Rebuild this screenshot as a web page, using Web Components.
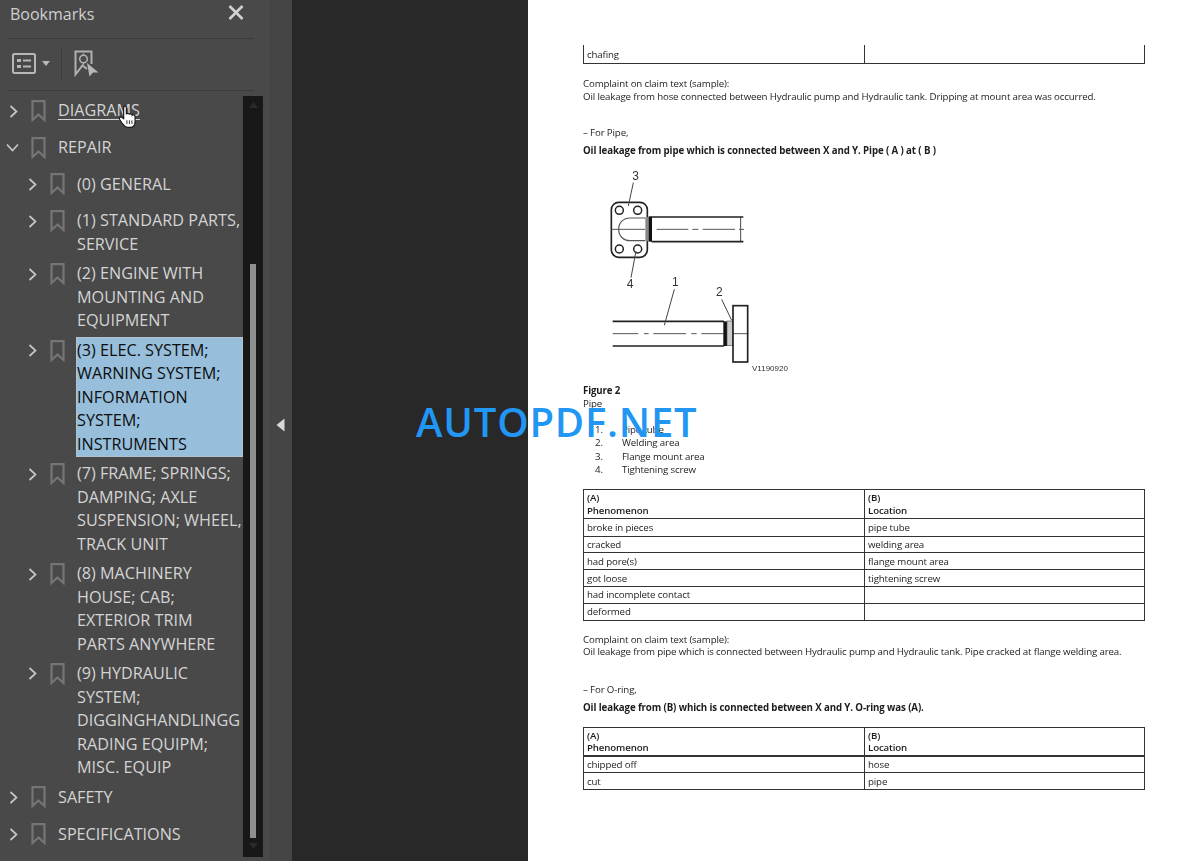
<!DOCTYPE html>
<html lang="en">
<head>
<meta charset="utf-8">
<title>Bookmarks</title>
<style>
  html, body { margin: 0; height: 100%; overflow: hidden; background: #282828; }
</style>
</head>
<body>
<pdf-viewer>
  <bookmarks-panel slot="side">
    <bookmark-item hover>DIAGRAMS</bookmark-item>
    <bookmark-item open>REPAIR</bookmark-item>
    <bookmark-item level="1">(0) GENERAL</bookmark-item>
    <bookmark-item level="1">(1) STANDARD PARTS,<br>SERVICE</bookmark-item>
    <bookmark-item level="1">(2) ENGINE WITH<br>MOUNTING AND<br>EQUIPMENT</bookmark-item>
    <bookmark-item level="1" selected>(3) ELEC. SYSTEM;<br>WARNING SYSTEM;<br>INFORMATION<br>SYSTEM;<br>INSTRUMENTS</bookmark-item>
    <bookmark-item level="1">(7) FRAME; SPRINGS;<br>DAMPING; AXLE<br>SUSPENSION; WHEEL,<br>TRACK UNIT</bookmark-item>
    <bookmark-item level="1">(8) MACHINERY<br>HOUSE; CAB;<br>EXTERIOR TRIM<br>PARTS ANYWHERE</bookmark-item>
    <bookmark-item level="1">(9) HYDRAULIC<br>SYSTEM;<br>DIGGINGHANDLINGG<br>RADING EQUIPM;<br>MISC. EQUIP</bookmark-item>
    <bookmark-item>SAFETY</bookmark-item>
    <bookmark-item>SPECIFICATIONS</bookmark-item>
  </bookmarks-panel>
  <pdf-page slot="main">
    <spec-table open-top style="margin-top:45px" rows="17.5">
      <spec-row>chafing</spec-row>
    </spec-table>
    <pdf-para style="margin-top:14.5px">Complaint on claim text (sample):<br>Oil leakage from hose connected between Hydraulic pump and Hydraulic tank. Dripping at mount area was occurred.</pdf-para>
    <pdf-para style="margin-top:24px">– For Pipe,</pdf-para>
    <pdf-para bold style="margin-top:5.5px">Oil leakage from pipe which is connected between X and Y. Pipe ( A ) at ( B )</pdf-para>
    <pipe-figure style="margin-top:3.5px"></pipe-figure>
    <pdf-para style="margin-top:4px"><b>Figure 2</b><br>Pipe</pdf-para>
    <pdf-list style="margin-top:13px">
      <span>1.</span><span>Pipe tube</span>
      <span>2.</span><span>Welding area</span>
      <span>3.</span><span>Flange mount area</span>
      <span>4.</span><span>Tightening screw</span>
    </pdf-list>
    <spec-table style="margin-top:12.8px" rows="29.5 17.5 16.5 17 16.5 17 16">
      <spec-row head><span>(A)<br>Phenomenon</span><span slot="b">(B)<br>Location</span></spec-row>
      <spec-row>broke in pieces<span slot="b">pipe tube</span></spec-row>
      <spec-row>cracked<span slot="b">welding area</span></spec-row>
      <spec-row>had pore(s)<span slot="b">flange mount area</span></spec-row>
      <spec-row>got loose<span slot="b">tightening screw</span></spec-row>
      <spec-row>had incomplete contact</spec-row>
      <spec-row>deformed</spec-row>
    </spec-table>
    <pdf-para style="margin-top:13px">Complaint on claim text (sample):<br>Oil leakage from pipe which is connected between Hydraulic pump and Hydraulic tank. Pipe cracked at flange welding area.</pdf-para>
    <pdf-para style="margin-top:25px">– For O-ring,</pdf-para>
    <pdf-para bold style="margin-top:6px">Oil leakage from (B) which is connected between X and Y. O-ring was (A).</pdf-para>
    <spec-table style="margin-top:12.25px" rows="28.5 16.5 16">
      <spec-row head thick><span>(A)<br>Phenomenon</span><span slot="b">(B)<br>Location</span></spec-row>
      <spec-row>chipped off<span slot="b">hose</span></spec-row>
      <spec-row>cut<span slot="b">pipe</span></spec-row>
    </spec-table>
  </pdf-page>
</pdf-viewer>

<template id="viewer-tpl">
  <style>
    :host { display: flex; height: 861px; width: 1200px; position: relative; overflow: hidden; }
    .side { width: 270px; flex: none; }
    .split { width: 22px; flex: none; background: #454545; border-left: 1px solid #414141; box-sizing: border-box;
      display: flex; align-items: center; justify-content: center; }
    .split svg { display: block; margin: -11px 0 0 -2px; }
    .gap { width: 236px; flex: none; background: #282828; }
    .main { flex: 1; background: #fff; }
    .mark { position: absolute; left: 416px; top: 395px; font: 600 40px/54px "Open Sans", sans-serif; color: #2196f3; letter-spacing: .8px; white-space: nowrap; }
  </style>
  <div class="side"><slot name="side"></slot></div>
  <div class="split"><svg width="9" height="14" viewBox="0 0 9 14"><path d="M8.5 .5V13.5L.5 7Z" fill="#d9d9d9"/></svg></div>
  <div class="gap"></div>
  <div class="main"><slot name="main"></slot></div>
  <div class="mark">AUTOPDF.NET</div>
</template>

<template id="panel-tpl">
  <style>
    :host { display: flex; flex-direction: column; height: 100%; background: #494949; color: #d4d4d4; font-family: "Open Sans", sans-serif; position: relative; }
    header { height: 38px; flex: none; margin: 0 16px 0 9px; border-bottom: 1px solid #3b3b3b; display: flex; justify-content: space-between; }
    h1 { margin: 0 0 0 1px; font: 400 16px/28px "Open Sans", sans-serif; color: #cfcfcf; }
    header svg { margin: 5px 10px 0 0; }
    .tools { height: 48px; padding-bottom: 3px; flex: none; margin: 0 16px 0 9px; border-bottom: 1px solid #3b3b3b; display: flex; align-items: center; }
    .tools .sep { width: 1px; height: 33px; background: #3c3c3c; margin: 0 12px 0 11px; }
    .tools .caret { margin-left: 6px; }
    .tools svg { display: block; flex: none; }
    .tools .list { margin-left: 3px; }
    .body { flex: 1; display: flex; margin-top: 5px; min-height: 0; }
    .tree { width: 243px; flex: none; display: flex; flex-direction: column; gap: 2.5px; overflow: hidden; }
    .bar { width: 20px; flex: none; height: 761px; background: #181818; display: flex; flex-direction: column; align-items: center; }
    .bar .up, .bar .down { flex: none; }
    .bar .up { margin-top: 6px; }
    .bar .fill { height: 156px; }
    .bar .thumb { width: 6px; height: 574px; background: #8f8f8f; }
    .bar .down { margin-top: 5px; }
    .hand { position: absolute; left: 118px; top: 104px; }
  </style>
  <header>
    <h1>Bookmarks</h1>
    <svg width="16" height="15" viewBox="0 0 16 15"><path d="M1.5 1 14.5 14M14.5 1 1.5 14" stroke="#d2d2d2" stroke-width="2.6" fill="none"/></svg>
  </header>
  <div class="tools">
    <svg class="list" width="24" height="21" viewBox="0 0 24 21" fill="none">
      <rect x="1" y="1" width="22" height="19" rx="1.5" stroke="#b8b8b8" stroke-width="2"/>
      <rect x="5" y="6" width="4" height="3" fill="#b8b8b8"/><rect x="5" y="12" width="4" height="3" fill="#b8b8b8"/>
      <path d="M11 7.5h8M11 13.5h8" stroke="#b8b8b8" stroke-width="2"/>
    </svg>
    <svg class="caret" width="8" height="5" viewBox="0 0 8 5"><path d="M0 0H8L4 5Z" fill="#b8b8b8"/></svg>
    <div class="sep"></div>
    <svg width="25" height="27" viewBox="0 0 25 27" fill="none">
      <path d="M13 19 8.5 15.5 1.5 24.5V1.5H17.5V14" stroke="#b0b0b0" stroke-width="2"/>
      <circle cx="9.5" cy="9" r="3.8" stroke="#b0b0b0" stroke-width="1.6"/>
      <path d="M9.5 3.5v2M9.5 12.5v2" stroke="#b0b0b0" stroke-width="1.4"/>
      <path d="M13 13 24.5 22.5H19L15.5 26.5Z" fill="#b8b8b8"/>
    </svg>
  </div>
  <div class="body">
    <div class="tree"><slot></slot></div>
    <div class="bar">
      <svg class="up" width="9" height="6" viewBox="0 0 9 6"><path d="M0 6H9L4.5 0Z" fill="#2a2a2a"/></svg>
      <div class="fill"></div>
      <div class="thumb"></div>
      <svg class="down" width="9" height="6" viewBox="0 0 9 6"><path d="M0 0H9L4.5 6Z" fill="#2a2a2a"/></svg>
    </div>
  </div>
  <svg class="hand" width="20" height="25" viewBox="0 0 18 23">
    <path d="M5 13.5V3.5C5 1.5 7.5 1.5 7.5 3.5V9.5C7.8 8.2 10 8.2 10.2 9.7 10.6 8.6 12.6 8.8 12.8 10.3 13.3 9.5 15.4 9.8 15.5 11.6V16C15.5 19 14 21.5 11 21.5H8.5C6 21.5 5 19.5 3.5 17.5L1.2 14C.4 12.5 2.4 11.2 3.5 12.4Z" fill="#fff" stroke="#1b1b1b" stroke-width="1.1"/>
    <path d="M8 15v3.5M10.3 15v3.5M12.6 15v3.5" stroke="#333" stroke-width=".9"/>
  </svg>
</template>

<template id="item-tpl">
  <style>
    :host { display: flex; align-items: flex-start; min-height: 34.2px; color: #d4d4d4; font: 400 16.2px/23.5px "Open Sans", sans-serif; white-space: nowrap; }
    :host([level="1"]) { padding-left: 19px; }
    .chev { width: 31px; flex: none; height: 30px; display: flex; align-items: center; padding-left: 9px; box-sizing: border-box; }
    .mark { width: 27px; flex: none; height: 30px; display: flex; align-items: center; }
    svg { display: block; }
    .txt { flex: 1; min-width: 0; margin-top: 1.5px; padding-top: 1.9px; padding-bottom: .1px; }
    :host([level="1"]) .txt { margin-left: -1px; padding-left: 1px; }
    :host([selected]) .txt { background: #97bfdb; color: #0e0e0e; outline: 1px dotted #c8c8c8; outline-offset: -1px; }
    :host([hover]) .txt span { text-decoration: underline; text-underline-offset: 3px; }
  </style>
  <div class="chev"><svg class="c" width="9" height="13" viewBox="0 0 9 13"><path d="M1.5 1 7.5 6.5 1.5 12" fill="none" stroke="#c6c6c6" stroke-width="1.7"/></svg></div>
  <div class="mark"><svg width="15" height="22" viewBox="0 0 15 22"><path d="M1.5 1.2H13.5V20L7.5 14.5 1.5 20Z" fill="none" stroke="#757575" stroke-width="2.2"/></svg></div>
  <div class="txt"><span><slot></slot></span></div>
</template>

<template id="page-tpl">
  <style>
    :host { display: block; height: 861px; box-sizing: border-box; padding: 0 55px; background: #fff; color: #1c1c1c; overflow: hidden;
      font-family: "Open Sans", sans-serif; font-size: 9.7px; }
    .ink { filter: blur(.35px); }
  </style>
  <div class="ink"><slot></slot></div>
</template>

<template id="para-tpl">
  <style>
    :host { display: block; font: 400 9.7px/12.5px "Open Sans", sans-serif; letter-spacing: -.135px; white-space: nowrap; }
    :host([bold]) { font-weight: 700; letter-spacing: -.11px; }
  </style>
  <slot></slot>
</template>

<template id="list-tpl">
  <style>
    :host { display: grid; grid-template-columns: 27px 1fr; padding-left: 12px; font: 400 9.7px/13.3px "Open Sans", sans-serif; letter-spacing: -.135px; }
  </style>
  <slot></slot>
</template>

<template id="table-tpl">
  <style>
    :host { display: grid; width: 562px; border: 1px solid #333; box-sizing: border-box; }
    :host([open-top]) { border-top: 0; }
  </style>
  <slot></slot>
</template>

<template id="row-tpl">
  <style>
    :host { display: grid; grid-template-columns: 280px 1fr; font: 400 9.7px/12.5px "Open Sans", sans-serif; letter-spacing: -.135px; border-bottom: 1px solid #333; box-sizing: border-box; }
    :host(:last-child) { border-bottom: 0; }
    :host([head]) { font-weight: 600; }
    :host([thick]) { border-bottom-width: 2px; }
    :host(:only-child) .cell { padding-top: 3.5px; }
    .cell { padding: 1.5px 3px 0; display: flex; align-items: center; white-space: nowrap; }
    .b { border-left: 1px solid #333; }
  </style>
  <div class="cell"><slot></slot></div>
  <div class="cell b"><slot name="b"></slot></div>
</template>

<template id="figure-tpl">
  <style>
    :host { display: block; height: 220px; margin-left: -13px; }
    svg { display: block; filter: blur(.45px); }
    text { font-family: "Liberation Sans", sans-serif; fill: #333; }
  </style>
  <svg width="240" height="220" viewBox="0 0 720 660" fill="none" stroke="#222">
    <rect x="124" y="124" width="108" height="165" rx="22" stroke-width="5"/>
    <circle cx="148" cy="148" r="12" stroke-width="4.5"/><circle cx="203" cy="148" r="12" stroke-width="4.5"/>
    <circle cx="148" cy="264" r="12" stroke-width="4.5"/><circle cx="203" cy="264" r="12" stroke-width="4.5"/>
    <path d="M226 171H180C160 171 146 185 146 205 146 225 160 239 180 239H226" stroke-width="3.5" stroke="#555"/>
    <rect x="226" y="168" width="10" height="72" fill="#888" stroke="none"/>
    <rect x="236" y="166" width="10" height="76" fill="#111" stroke="none"/>
    <path d="M245 168H520M245 242H520" stroke-width="5"/>
    <path d="M512 168V242" stroke-width="2.5"/>
    <path d="M124 205H225M260 205H355M367 205H385M398 205H495M507 205H522" stroke-width="3" stroke="#555"/>
    <path d="M128 481H462M128 555H462" stroke-width="5"/>
    <path d="M128 518H205M222 518H236M250 518H348M364 518H380M394 518H460M490 518H535" stroke-width="3" stroke="#555"/>
    <rect x="460" y="481" width="11" height="74" fill="#111" stroke="none"/>
    <rect x="471" y="480" width="17" height="74" fill="#ccc" stroke="#555" stroke-width="2"/>
    <rect x="489" y="434" width="44" height="169" stroke-width="5"/>
    <path d="M313 385 283 493M455 415 485 478M190 65 175 135M198 270 183 350" stroke-width="3" stroke="#444"/>
    <text x="187" y="58" font-size="36" stroke="none">3</text>
    <text x="170" y="382" font-size="36" stroke="none">4</text>
    <text x="306" y="375" font-size="36" stroke="none">1</text>
    <text x="438" y="404" font-size="36" stroke="none">2</text>
    <text x="546" y="630" font-size="24" stroke="none">V1190920</text>
  </svg>
</template>

<script>
  // every element here is just its template cloned into an open shadow root
  function tpl(id) {
    return document.getElementById(id).content.cloneNode(true);
  }

  class ShadowBase extends HTMLElement {
    constructor() {
      super();
      this.attachShadow({ mode: 'open' }).appendChild(tpl(this.constructor.tplId));
    }
  }

  class PdfViewer extends ShadowBase { static tplId = 'viewer-tpl'; }
  class BookmarksPanel extends ShadowBase { static tplId = 'panel-tpl'; }
  class PdfPage extends ShadowBase { static tplId = 'page-tpl'; }
  class PdfPara extends ShadowBase { static tplId = 'para-tpl'; }
  class PdfList extends ShadowBase { static tplId = 'list-tpl'; }
  class SpecRow extends ShadowBase { static tplId = 'row-tpl'; }
  class PipeFigure extends ShadowBase { static tplId = 'figure-tpl'; }

  class BookmarkItem extends ShadowBase {
    static tplId = 'item-tpl';
    connectedCallback() {
      if (this.hasAttribute('open')) {
        let c = this.shadowRoot.querySelector('.c');
        c.setAttribute('width', '13');
        c.setAttribute('height', '9');
        c.setAttribute('viewBox', '0 0 13 9');
        c.innerHTML = '<path d="M1 1.5 6.5 7.5 12 1.5" fill="none" stroke="#c6c6c6" stroke-width="1.7"/>';
        this.shadowRoot.querySelector('.chev').style.paddingLeft = '6px';
      }
    }
  }

  class SpecTable extends ShadowBase {
    static tplId = 'table-tpl';
    connectedCallback() {
      // row heights come from the rows attribute, one number per row
      let h = (this.getAttribute('rows') || '').split(' ').map(Number);
      this.style.gridTemplateRows = h.map(v => v + 'px').join(' ');
      this.style.height = h.reduce((a, b) => a + b, 0) + (this.hasAttribute('open-top') ? 1 : 2) + 'px';
    }
  }

  customElements.define('pdf-viewer', PdfViewer);
  customElements.define('bookmarks-panel', BookmarksPanel);
  customElements.define('bookmark-item', BookmarkItem);
  customElements.define('pdf-page', PdfPage);
  customElements.define('pdf-para', PdfPara);
  customElements.define('pdf-list', PdfList);
  customElements.define('spec-table', SpecTable);
  customElements.define('spec-row', SpecRow);
  customElements.define('pipe-figure', PipeFigure);
</script>
</body>
</html>
